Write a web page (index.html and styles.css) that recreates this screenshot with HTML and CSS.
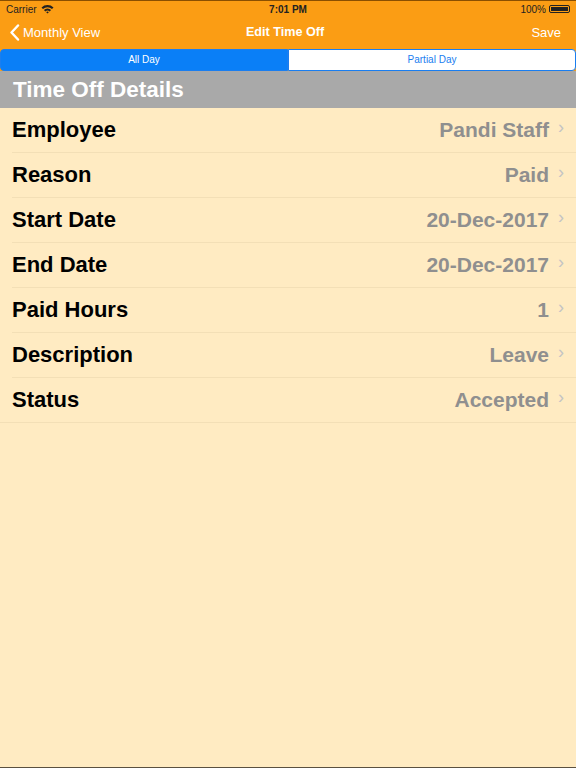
FILE: index.html
```html
<!DOCTYPE html>
<html lang="en">

<head>
    <link rel="stylesheet" href="styles.css">
</head>

<body>
    <div class="top-bar">
        <div class="status-bar">
            <div class="status-left">
                Carrier
                <svg class="wifi" width="13" height="10" viewBox="0 0 13 10">
                    <path d="M0.5 3.6 A8.5 8.5 0 0 1 12.5 3.6 L11 5.1 A6.4 6.4 0 0 0 2 5.1 Z" fill="#222"/>
                    <path d="M2.9 6 A5 5 0 0 1 10.1 6 L8.6 7.5 A2.9 2.9 0 0 0 4.4 7.5 Z" fill="#222"/>
                    <path d="M5.2 8.3 A1.8 1.8 0 0 1 7.8 8.3 L6.5 9.6 Z" fill="#222"/>
                </svg>
            </div>
            <div class="status-time">7:01 PM</div>
            <div class="status-right">
                100%
                <span class="battery"><span class="battery-fill"></span></span>
            </div>
        </div>
        <div class="nav-bar">
            <div class="nav-back">
                <svg width="11" height="17" viewBox="0 0 11 17">
                    <path d="M9 1.5 L2.5 8.5 L9 15.5" fill="none" stroke="#fff" stroke-width="2.4" stroke-linecap="round" stroke-linejoin="round"/>
                </svg>
                Monthly View
            </div>
            <div class="nav-title">Edit Time Off</div>
            <div class="nav-save">Save</div>
        </div>
    </div>

    <div class="segment">
        <div class="segment-item active">All Day</div>
        <div class="segment-item">Partial Day</div>
    </div>

    <div class="section-header">Time Off Details</div>

    <div class="detail-list">
        <div class="detail-row">
            <span class="detail-label">Employee</span>
            <span class="detail-value">Pandi Staff</span>
            <span class="chevron">&#8250;</span>
        </div>
        <div class="detail-row">
            <span class="detail-label">Reason</span>
            <span class="detail-value">Paid</span>
            <span class="chevron">&#8250;</span>
        </div>
        <div class="detail-row">
            <span class="detail-label">Start Date</span>
            <span class="detail-value">20-Dec-2017</span>
            <span class="chevron">&#8250;</span>
        </div>
        <div class="detail-row">
            <span class="detail-label">End Date</span>
            <span class="detail-value">20-Dec-2017</span>
            <span class="chevron">&#8250;</span>
        </div>
        <div class="detail-row">
            <span class="detail-label">Paid Hours</span>
            <span class="detail-value">1</span>
            <span class="chevron">&#8250;</span>
        </div>
        <div class="detail-row">
            <span class="detail-label">Description</span>
            <span class="detail-value">Leave</span>
            <span class="chevron">&#8250;</span>
        </div>
        <div class="detail-row">
            <span class="detail-label">Status</span>
            <span class="detail-value">Accepted</span>
            <span class="chevron">&#8250;</span>
        </div>
    </div>
</body>

</html>
```

FILE: styles.css
```css
html,
body {
    height: 100%;
}

body {
    font-family: "Liberation Sans", Arial, sans-serif;
    background-color: #ffebc2;
    margin: 0;
    padding: 0;
    border-bottom: 1px solid #5a5040;
    box-sizing: border-box;
}

.top-bar {
    background-color: #fb9d14;
    border-top: 1px solid #8a4f00;
}

.status-bar {
    height: 16px;
    display: flex;
    align-items: center;
    justify-content: space-between;
    padding: 0 6px;
    font-size: 10px;
    color: #222;
}

.status-left,
.status-right {
    flex: 1;
    display: flex;
    align-items: center;
    gap: 4px;
}

.status-right {
    justify-content: flex-end;
    gap: 3px;
}

.status-time {
    font-weight: bold;
}

.battery {
    width: 21px;
    height: 8px;
    border: 1px solid #222;
    border-radius: 2px;
    padding: 1px;
    box-sizing: border-box;
    display: flex;
}

.battery-fill {
    flex: 1;
    background-color: #222;
}

.nav-bar {
    height: 30px;
    display: flex;
    align-items: center;
    justify-content: space-between;
    padding: 0 15px 0 9px;
    color: #fff;
    font-size: 13px;
}

.nav-back {
    flex: 1;
    display: flex;
    align-items: center;
    gap: 3px;
}

.nav-title {
    font-weight: bold;
    font-size: 12.6px;
}

.nav-save {
    flex: 1;
    text-align: right;
}

.segment {
    display: flex;
    background-color: #fb9d14;
    padding-top: 2px;
}

.segment-item {
    flex: 1;
    height: 22px;
    line-height: 20px;
    box-sizing: border-box;
    text-align: center;
    font-size: 10px;
    color: #1a7ef0;
    background-color: #fff;
    border: 1px solid #1a7ef0;
}

.segment-item:first-child {
    border-radius: 4px 0 0 4px;
}

.segment-item:last-child {
    border-radius: 0 4px 4px 0;
}

.segment-item.active {
    background-color: #0a7ff7;
    color: #fff;
}

.section-header {
    background-color: #a9a9a9;
    color: #fff;
    font-weight: bold;
    font-size: 22.5px;
    height: 37px;
    line-height: 37px;
    padding-left: 13px;
}

.detail-row {
    display: flex;
    align-items: center;
    height: 45px;
    margin-left: 12px;
    padding-right: 12px;
    border-bottom: 1px solid #f3dfb6;
    box-sizing: border-box;
}

/* last separator runs edge to edge */
.detail-row:last-child {
    margin-left: 0;
    padding-left: 12px;
}

.detail-label {
    flex: 1;
    font-weight: bold;
    font-size: 22px;
    color: #000;
}

.detail-value {
    font-weight: bold;
    font-size: 21px;
    color: #8f8f8f;
}

.chevron {
    margin-left: 9px;
    color: #c4c4c4;
    font-size: 18px;
    position: relative;
    top: -3px;
}
```
